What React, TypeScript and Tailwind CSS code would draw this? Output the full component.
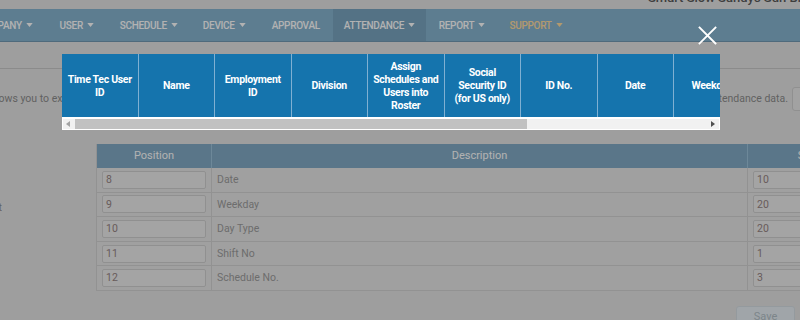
import React from "react"

const navItems = [
  { label: "COMPANY", box: "w-[83px] -ml-[37px]", caret: true },
  { label: "USER", box: "w-[61.5px]", caret: true },
  { label: "SCHEDULE", box: "w-[82.5px]", caret: true },
  { label: "DEVICE", box: "w-[68.5px]", caret: true },
  { label: "APPROVAL", box: "w-[74.5px]", caret: false },
  { label: "ATTENDANCE", box: "w-[93px] bg-[#79a4bf]", caret: true },
  { label: "REPORT", box: "w-[72px]", caret: true },
  { label: "SUPPORT", box: "w-[76px] text-[#ffdc9e]", caret: true },
]

// header labels, broken the way the export preview wraps them
const columns = [
  ["Time Tec User", "ID"],
  ["Name"],
  ["Employment", "ID"],
  ["Division"],
  ["Assign", "Schedules and", "Users into", "Roster"],
  ["Social", "Security ID", "(for US only)"],
  ["ID No."],
  ["Date"],
  ["Weekday"],
]

const layoutRows = [
  { pos: "8", desc: "Date", size: "10" },
  { pos: "9", desc: "Weekday", size: "20" },
  { pos: "10", desc: "Day Type", size: "20" },
  { pos: "11", desc: "Shift No", size: "1" },
  { pos: "12", desc: "Schedule No.", size: "3" },
]

function Caret() {
  return (
    <svg viewBox="0 0 8 5" className="ml-[4px] h-[4px] w-[7px]" fill="currentColor">
      <path d="M0 0h8L4 5z" />
    </svg>
  )
}

function NavBar() {
  return (
    <nav className="flex h-[33px] border-b border-[#7199b2] bg-[#86b3ce] text-[10px] font-medium tracking-[-0.3px] text-white">
      {navItems.map((n) => (
        <div key={n.label} className={`flex shrink-0 items-center justify-center ${n.box}`}>
          <span>{n.label}</span>
          {n.caret && <Caret />}
        </div>
      ))}
    </nav>
  )
}

function LayoutTable() {
  return (
    <div className="w-[900px] shrink-0 border-l border-[#d2d2d2] bg-[#e6e6e6] text-[10.5px]">
      <div className="flex h-[24px] bg-[#82aac4] text-[11px] text-white">
        <div className="flex w-[115px] items-center justify-center border-r border-[#9cc3db]">Position</div>
        <div className="flex w-[536px] items-center justify-center border-r border-[#9cc3db]">Description</div>
        <div className="flex w-[120px] items-center justify-center">Size</div>
      </div>
      {layoutRows.map((r) => (
        <div key={r.pos} className="flex h-[24.6px] border-b border-[#d2d2d2] text-[#9c9c9c]">
          <div className="flex w-[115px] items-center border-r border-[#d2d2d2] px-[5px]">
            <div className="flex h-[18px] w-[105px] items-center rounded-[2px] border border-[#cfcfcf] bg-[#ebebeb] px-[3px] text-[#968484]">
              {r.pos}
            </div>
          </div>
          <div className="flex w-[536px] items-center border-r border-[#d2d2d2] px-[5px]">{r.desc}</div>
          <div className="flex w-[120px] items-center px-[5px]">
            <div className="flex h-[18px] w-[110px] items-center rounded-[2px] border border-[#cfcfcf] bg-[#ebebeb] px-[3px] text-[#968484]">
              {r.size}
            </div>
          </div>
        </div>
      ))}
    </div>
  )
}

function ExportModal() {
  return (
    <>
      <div className="absolute left-[62px] top-[54px] w-[658px] overflow-hidden bg-white">
        <div className="flex h-[63px] bg-[#1574ad] text-[10.5px] font-bold leading-[13px] tracking-[-0.3px] text-white">
          {columns.map((lines) => (
            <div
              key={lines.join(" ")}
              className="flex w-[76.5px] shrink-0 flex-col items-center justify-center whitespace-nowrap border-r border-[#7fb0d2] text-center"
            >
              {lines.map((l) => (
                <span key={l}>{l}</span>
              ))}
            </div>
          ))}
        </div>
        <div className="mx-[1px] mb-[1px] mt-[2px] flex h-[10px] items-center bg-[#f1f1f1]">
          <svg viewBox="0 0 4 6" className="ml-[3px] h-[6px] w-[4px]" fill="#a3a3a3">
            <path d="M4 0v6L0 3z" />
          </svg>
          <div className="ml-[5px] h-[10px] w-[452px] bg-[#c1c1c1]" />
          <div className="flex-1" />
          <svg viewBox="0 0 4 6" className="mr-[4px] h-[6px] w-[4px]" fill="#505050">
            <path d="M0 0v6l4-3z" />
          </svg>
        </div>
      </div>
      <button className="absolute left-[698px] top-[26px] h-[19px] w-[19px]" aria-label="Close">
        <svg viewBox="0 0 19 19" className="h-[19px] w-[19px]" stroke="white" strokeWidth="1.8" strokeLinecap="square">
          <path d="M1.5 1.5l16 16M17.5 1.5l-16 16" />
        </svg>
      </button>
    </>
  )
}

export default function App() {
  return (
    <div className="relative h-[320px] w-[800px] overflow-hidden bg-[#e3e3e3] font-['Roboto',sans-serif]">
      <div className="h-[9px] overflow-hidden">
        <div className="-mt-[10px] whitespace-nowrap pl-[648px] text-[13px] font-medium leading-[15px] text-[#5a5a5a]">
          Smart Slow Sandys Sdn Bhd (M)
        </div>
      </div>
      <NavBar />
      <div className="h-[27px] border-b border-[#c8c8c8]" />

      <div className="mt-[18px] flex h-[24px] w-[832px] items-center text-[10.5px] text-[#8c8c8c]">
        <div className="flex flex-1 justify-between whitespace-nowrap">
          <span className="-ml-[76px]">This function allows you to export the attendance data</span>
          <span>in the layout below, based on the attendance data.</span>
        </div>
        <div className="ml-[4px] h-[24px] w-[40px] shrink-0 rounded-[3px] border border-[#cfcfcf] bg-[#e9e9e9]" />
      </div>

      <div className="mt-[33px] flex">
        <div className="w-[96px] shrink-0 pt-[56px] text-[10.5px] text-[#8c8c8c]">
          <span className="-ml-[52px] whitespace-nowrap">Text Layout</span>
        </div>
        <LayoutTable />
      </div>

      <div className="mt-[12px] pl-[736px]">
        <button className="h-[22px] w-[59px] rounded-[3px] border border-[#d5dde2] bg-[#e5edf3] text-[11px] text-[#b3bfc6]">
          Save
        </button>
      </div>

      <div className="absolute inset-0 bg-black/30" />
      <ExportModal />
    </div>
  )
}
